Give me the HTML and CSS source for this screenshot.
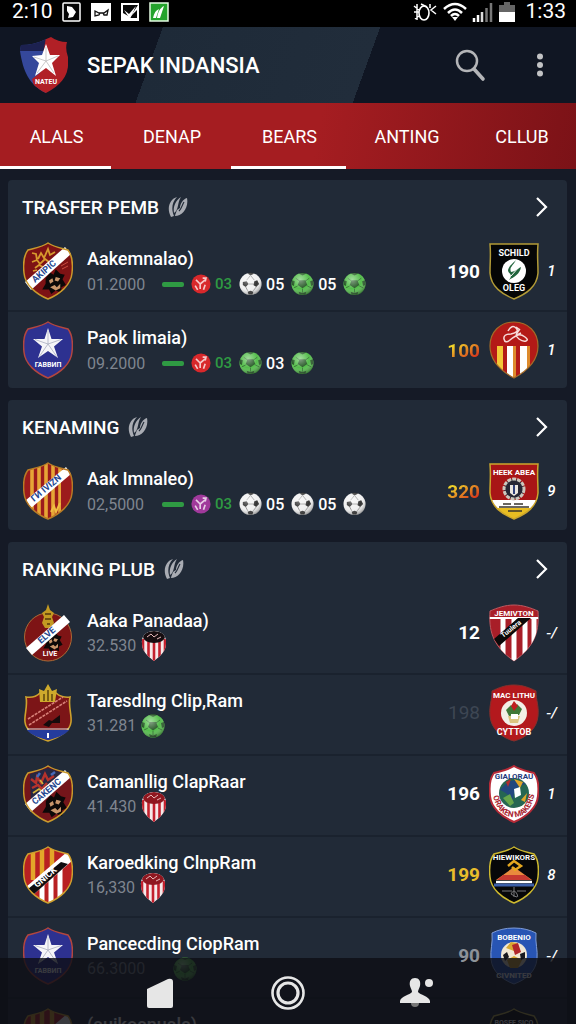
FILE: index.html
```html
<!DOCTYPE html>
<html lang="id">
<head>
<meta charset="utf-8">
<meta name="viewport" content="width=device-width, initial-scale=1">
<title>Sepak Indansia</title>
<link rel="stylesheet" href="styles.css">
</head>
<body>
<svg class="defs" aria-hidden="true">
  <defs>
    <path id="shield" d="M25 1C31 5 38 6 45 8C49 13 50 22 49 31C48 43 37 52 25 57C13 52 2 43 1 31C0 22 1 13 5 8C12 6 19 5 25 1Z"/>
    <path id="flat" d="M1 2H49C48 14 49 18 49 31C48 45 37 52 25 57C13 52 2 45 1 31C1 18 2 14 1 2Z"/>
    <path id="sunShape" d="M25 1C39 1 49 11 49 25C49 40 38 50 25 57C12 50 1 40 1 25C1 11 11 1 25 1Z"/>
    <clipPath id="shieldClip"><use href="#shield"/></clipPath>
    <clipPath id="flatClip"><use href="#flat"/></clipPath>
    <clipPath id="sunClip"><use href="#sunShape"/></clipPath>
    <radialGradient id="shine" cx=".4" cy=".3" r=".75"><stop offset="0" stop-color="#fff" stop-opacity=".45"/><stop offset=".55" stop-color="#fff" stop-opacity="0"/><stop offset="1" stop-color="#000" stop-opacity=".45"/></radialGradient>

    <symbol id="lion" viewBox="0 0 24 24">
      <path d="M5 9L9 4L12 6L14 1L18 5L22 6L20 10L23 15L19 17L19 22L14 20L10 23L8 19L2 19L5 14Z" fill="#0c0808"/>
      <path d="M8 11l3-2 1 3-3 2zM14 8l4 1-2 3-3-1zM9 17l4-2 2 2 3-3 0 4-4 2z" fill="#c9956b"/>
    </symbol>
    <symbol id="c-lion" viewBox="0 0 50 58">
      <use href="#shield" fill="#7d1214"/>
      <path d="M9 11l4 1 1 6M15 17l3-6 3 5 4-9 2 6 5-3M9 20l5-2 3 4 5-5 4 3M12 26l4-3 4 2M10 29l4-1" stroke="#d79a2d" stroke-width="1.800" fill="none"/>
      <use href="#lion" x="17" y="25" width="27" height="29"/>
      <path d="M2 40L42 5L48 12L8 48Z" fill="#fff"/>
      <text transform="translate(12 41) rotate(-41)" class="band-text">AKIPIC</text>
      <path d="M38 24l7-4M39 27l6-3" stroke="#c94b40"/>
      <use href="#shield" fill="none" stroke="#c9992c" stroke-width="1.500"/>
    </symbol>
    <symbol id="c-lion2" viewBox="0 0 50 58">
      <use href="#shield" fill="#74151a"/>
      <path d="M7 9L25 3L43 9L8 38Z" fill="#272741"/>
      <path d="M8 14l5 4 1-6 4 6 4-9 3 6 6-4M9 23l6-3 4 4 5-6" stroke="#b6322c" stroke-width="2.500" fill="none"/>
      <path d="M10 28l6-4 4 3 4-6M17 15l3 4" stroke="#d3b13b" stroke-width="1.800" fill="none"/>
      <path d="M14 12l3-4M28 10l4-3" stroke="#4669b8" stroke-width="2.500"/>
      <use href="#lion" x="17" y="25" width="28" height="29"/>
      <path d="M2 39L42 5L48 12L8 47Z" fill="#fff"/>
      <text transform="translate(12 40) rotate(-40)" class="band-text">CAKENC</text>
      <use href="#shield" fill="none" stroke="#c9992c" stroke-width="1.500"/>
    </symbol>
    <symbol id="c-star" viewBox="0 0 50 58">
      <use href="#shield" fill="#2d3190" stroke="#b3463f" stroke-width="1.500"/>
      <path d="M25 7L28.500 18L40 18L31 25.500L35 37L25 30L15 37L19 25.500L10 18L21.500 18Z" fill="#f5f5f8"/>
      <path d="M25 10V23L38 18.500M25 23L34 36M25 23L16 36M25 23L12 18.500" fill="none" stroke="#a9adbf" stroke-width=".8"/>
      <text x="25" y="46" class="crest-text tiny">ГАВВИП</text>
    </symbol>
    <symbol id="c-stripes" viewBox="0 0 50 58">
      <use href="#shield" fill="#9c1b1c"/>
      <g clip-path="url(#shieldClip)"><path d="M9 0V58M16 0V58M23 0V58M30 0V58M37 0V58" stroke="#e6a636" stroke-width="3.600"/><path d="M38 20H50V58H38Z" fill="#9c1b1c"/></g>
      <path d="M28 50l3-6 2 6 4-9" stroke="#f0bd42" stroke-width="2" fill="none"/>
      <path d="M3 38L43 5L48 12L8 46Z" fill="#fff"/>
      <text transform="translate(11 40) rotate(-40)" class="band-text">ГИ IVIZN</text>
      <use href="#shield" fill="none" stroke="#b77b25" stroke-width="1.500"/>
    </symbol>
    <symbol id="c-oval" viewBox="0 0 50 58">
      <ellipse cx="25" cy="33" rx="23.500" ry="24" fill="#7e1415" stroke="#a86a35"/>
      <path d="M25 0L27 6L31 9L29 13L31 19L28 24H22L19 19L21 13L19 9L23 6Z" fill="#c39a22"/>
      <path d="M22 10h6M22 15h6M24 20h3" stroke="#54390d" stroke-width="1.500"/>
      <use href="#lion" x="17" y="27" width="25" height="22"/>
      <path d="M3 44L41 11L47 18L9 51Z" fill="#fff"/>
      <text transform="translate(18 40) rotate(-41)" class="band-text">ELVE</text>
      <text x="27" y="52" class="crest-text tiny">LIVE</text>
    </symbol>
    <symbol id="c-crown" viewBox="0 0 50 58">
      <path id="crownShape" d="M3 13C9 14 14 12 17 9H33C36 12 42 14 47 13C45 22 49 31 48 38C47 47 37 53 25 57C13 53 3 47 2 38C1 31 5 22 3 13Z" fill="#7c1517" stroke="#cda12d" stroke-width="1.600"/>
      <path d="M4 46H46C42 51 34 54 25 56C16 54 8 51 4 46Z" fill="#253c9c"/>
      <path d="M4 45H46" stroke="#ddd" stroke-width="1.200"/>
      <path d="M5 35L40 13M6 41L44 17" stroke="#d88178" stroke-width="1.600" stroke-dasharray="3 1"/>
      <path d="M20 41l6-5 3 1 8-6v8H29l-3 4z" fill="#160b0c"/>
      <path d="M25 49v5" stroke="#fff" stroke-width="2"/>
      <path d="M17 18L16 5L21 7L25 0L29 7L34 5L32 18Z" fill="#ceaa2c"/>
      <path d="M21 17V10M25 17V6M29 17V10" stroke="#56400b" stroke-width="1.400"/>
    </symbol>
    <symbol id="c-redwhite" viewBox="0 0 50 58">
      <use href="#shield" fill="#b82022"/>
      <g clip-path="url(#shieldClip)">
        <path d="M10 0V34M19 0V30M29 0V25" stroke="#e3a629" stroke-width="4.500"/>
        <path d="M19 36V58M28 30V58M37 22V58" stroke="#fff" stroke-width="5"/>
        <path d="M3 41L44 6L50 14L10 49Z" fill="#fff"/>
        <path d="M5 43L38 16L45 18L10 49Z" fill="#0e0c10"/>
      </g>
      <text transform="translate(14 42) rotate(-40)" class="band-text outlined">GNICK</text>
      <use href="#shield" fill="none" stroke="#cfa02e" stroke-width="1.500"/>
    </symbol>

    <symbol id="r-schild" viewBox="0 0 50 58">
      <use href="#flat" fill="#050606" stroke="#b29b37" stroke-width="1.500"/>
      <circle cx="25" cy="29" r="12" fill="#fff"/>
      <path d="M27 18C24 24 20 25 22 30C25 30 28 27 32 25C31 32 25 35 20 38C25 32 19 32 19 28C20 24 24 21 27 18Z" fill="#20643c"/>
      <path d="M22 34l8-9" stroke="#fff"/>
      <text x="25" y="14" class="crest-text">SCHILD</text>
      <text x="25" y="49" class="crest-text">OLEG</text>
    </symbol>
    <symbol id="r-sun" viewBox="0 0 50 58">
      <use href="#sunShape" fill="#b31a17"/>
      <g clip-path="url(#sunClip)">
        <path d="M8 25H14V58H8Z" fill="#f3c838"/>
        <path d="M18 25H24V58H18ZM31 25H38V58H31Z" fill="#fff"/>
        <path d="M24 25H27V58H24ZM38 25H41V58H38Z" fill="#dd8a2c"/>
      </g>
      <path d="M19 10q4-7 8-3t-5 6q-8 0-7 5t6 1 8-5 7 2 1 4-7-2-2-6 3-4M27 6l4 3M28 14l4-2" fill="none" stroke="#f7dcda" stroke-width="1.500"/>
      <use href="#sunShape" fill="none" stroke="#a36b28" stroke-width="1.200"/>
    </symbol>
    <symbol id="r-heek" viewBox="0 0 50 58">
      <use href="#flat" fill="#a81516"/>
      <g clip-path="url(#flatClip)"><path d="M0 38H50V46H0Z" fill="#fff"/><path d="M0 46H50V58H0Z" fill="#e8bd22"/></g>
      <circle cx="25" cy="27" r="10" fill="#262634" stroke="#ccc7bd" stroke-width="3" stroke-dasharray="4 1"/>
      <path d="M21 23h8v8l-4 3-4-3z" fill="#ebe6e0"/><path d="M25 23v9" stroke="#30407a" stroke-width="2"/>
      <path d="M14 42h8m3 0h9M19 49h14M10 45h30" stroke="#39352d" stroke-width="1.400"/>
      <text x="25" y="13" class="crest-text small">HEEK ABEA</text>
      <use href="#flat" fill="none" stroke="#cba62d" stroke-width="1.500"/>
    </symbol>
    <symbol id="r-diagonal" viewBox="0 0 50 58">
      <clipPath id="pointClip"><path d="M25 1C34 1 42 4 49 7C50 25 48 41 25 57C2 41 0 25 1 7C8 4 16 1 25 1Z"/></clipPath>
      <path d="M25 1C34 1 42 4 49 7C50 25 48 41 25 57C2 41 0 25 1 7C8 4 16 1 25 1Z" fill="#a81e28" stroke="#bd5960"/>
      <g clip-path="url(#pointClip)"><path d="M14 15V58M25 15V58M36 15V58M45 15V58" stroke="#fff" stroke-width="5"/><path d="M0 14H50" stroke="#fff" stroke-width="2"/><path d="M5 35L29 14H42L10 42Z" fill="#0b0909"/></g>
      <text x="25" y="12" class="crest-text small">JEMIVTON</text>
      <text transform="translate(14 34) rotate(-38)" class="crest-text tiny left">Tuulera</text>
    </symbol>
    <symbol id="r-mac" viewBox="0 0 50 58">
      <path d="M25 1C34 1 41 4 47 7C47 17 50 21 49 32C48 45 37 54 25 57C13 54 2 45 1 32C0 21 3 17 3 7C9 4 16 1 25 1Z" fill="#b3191d" stroke="#86302c"/>
      <circle cx="25" cy="29" r="13" fill="#f3efe6"/>
      <path d="M17 26l5-5 3 3 3-4 5 5-3 6-10 1z" fill="#3f7837"/><path d="M22 22l3-5 4 5-4 5z" fill="#bf1e1f"/><path d="M19 32h12l-2 7h-8z" fill="#dbc680"/><path d="M22 30h7v5h-7z" fill="#fff"/>
      <text x="25" y="14" class="crest-text small">MAC LITHU</text>
      <text x="25" y="51" class="crest-text">CYTTOB</text>
    </symbol>
    <symbol id="r-bird" viewBox="0 0 50 58">
      <use href="#shield" fill="#fff" stroke="#b72a37" stroke-width="2"/>
      <circle cx="25" cy="28" r="15" fill="#256652"/>
      <path d="M11 25C20 15 25 12 37 19C28 21 25 25 24 35C20 30 16 27 11 25Z" fill="#23477e"/>
      <path d="M25 14l9 3-3 6zM32 35l6-7-2 9z" fill="#e0a528"/><path d="M25 24l6-2 1 8-6 3z" fill="#fff"/><path d="M14 33l7-4 4 9-4 3z" fill="#65a54b"/><path d="M17 17l5-3-3 8z" fill="#b12d2e"/>
      <text x="25" y="14" class="crest-text small blue">GIALORAU</text>
      <path id="birdArc" d="M4 31C9 50 19 52 25 52C33 52 43 48 46 25" fill="none"/>
      <text class="crest-text small red left"><textPath href="#birdArc">ORAKEN MAKERS</textPath></text>
    </symbol>
    <symbol id="r-hill" viewBox="0 0 50 58">
      <use href="#shield" fill="#070709"/>
      <path d="M25 21L43 34H7Z" fill="#e98a3d"/><path d="M14 29h22l6 5H8z" fill="#c63a31"/>
      <path d="M7 36H43" stroke="#fff" stroke-width="2.500"/><path d="M5 39H45" stroke="#3d60a9" stroke-width="3"/>
      <path d="M19 20l6-5 7 5-6 4-3-3" fill="none" stroke="#e5a720" stroke-width="2.500"/>
      <path d="M13 45h10m5 0h9M25 41v10M22 48q3-6 6 0t-6 0" stroke="#77777b" fill="none"/>
      <text x="25" y="14" class="crest-text small">HIEWIKORS</text>
      <use href="#shield" fill="none" stroke="#cdb92f" stroke-width="1.500"/>
    </symbol>
    <symbol id="r-blue" viewBox="0 0 50 58">
      <path d="M25 1C34 1 41 3 47 6C46 16 49 23 48 32C47 45 36 53 25 57C14 53 3 45 2 32C1 23 4 16 3 6C9 3 16 1 25 1Z" fill="#2855b4" stroke="#7f9cd7"/>
      <circle cx="25" cy="28" r="13" fill="#f0e7d4"/>
      <path d="M17 21l5-6 6 1-3 8zM18 33l7-4 8 4-4 8H21z" fill="#d9a832"/><path d="M23 18l6-2 3 9-6 3z" fill="#b1272b"/><path d="M14 28l4-3 2 5-4 4zM31 27l5-2v6l-4 2z" fill="#17181f"/>
      <text x="25" y="13" class="crest-text small">BOBENIO</text>
      <text x="25" y="51" class="crest-text small">CIVNITED</text>
    </symbol>
    <symbol id="r-dark" viewBox="0 0 50 58">
      <use href="#shield" fill="#0b0b0c" stroke="#c4b14c" stroke-width="1.500"/>
      <text x="25" y="17" class="crest-text tiny">BOSEF SICO</text>
      <circle cx="25" cy="30" r="9" fill="#b3963a"/>
    </symbol>

    <symbol id="ball" viewBox="0 0 24 24">
      <circle cx="12" cy="12" r="11.500" fill="currentColor"/>
      <path d="M9 8h6l2 5-5 3.500-5-3.500zM8 1l4 2 4-2-4-1zM1 8l3 1-1 5-2-1zM23 8l-3 1 1 5 2-1zM8 20l4 1.500 4-1.500-1 3H9z" fill="#17321b" opacity=".7"/>
      <path d="M9 9L5 6M15 9l4-3M17 14l4 2M7 14l-4 2M12 17v4" stroke="#17321b" opacity=".5"/>
      <circle cx="12" cy="12" r="11.500" fill="url(#shine)"/>
    </symbol>
    <symbol id="whiteball" viewBox="0 0 24 24">
      <circle cx="12" cy="12" r="11.500" fill="#f1f1f1"/>
      <path d="M4 10l4-1 2 3-3 3-3-2zM16 9l3-1 2 4-3 3-3-2zM9 20l3-1 3 1-1 3h-4zM9 1l3 2 4-2-4-1z" fill="#333"/>
      <path d="M10 12h5M7 15l2 4M18 15l-3 4M8 8l4-5 4 5" stroke="#999" fill="none"/>
      <circle cx="12" cy="12" r="11.500" fill="url(#shine)"/>
    </symbol>
    <symbol id="badge" viewBox="0 0 24 24">
      <circle cx="12" cy="12" r="11.500" fill="currentColor"/>
      <path d="M6 7l5 5v6M17 7l-6 5M14 5l4 0-1 4M5 14l3 5M17 13l-2 6" stroke="#fff" stroke-width="2" fill="none" opacity=".75"/>
    </symbol>
    <symbol id="stripeball" viewBox="0 0 26 30">
      <clipPath id="dropClip"><path d="M13 0C21 0 26 5 25 13C25 21 18 26 13 30C8 26 1 21 1 13C0 5 5 0 13 0Z"/></clipPath>
      <g clip-path="url(#dropClip)"><path d="M0 0H26V30H0Z" fill="#f5e9e9"/><path d="M2 8V30M7.500 8V30M13 8V30M18.500 8V30M24 8V30" stroke="#c3202d" stroke-width="2.600"/><ellipse cx="13" cy="6" rx="11" ry="6" fill="currentColor"/><path d="M6 6l4-3 3 3 4-3M16 8l4-2" stroke="#e7b9b9" fill="none"/></g>
    </symbol>
    <symbol id="hatch" viewBox="0 0 22 22">
      <path d="M10 1C3 3-1 12 4 21L7 20C4 13 5 6 10 1ZM14 1C8 5 6 11 7 17C12 14 10 7 14 1ZM20 2C16 3 13 8 13 12L10 14C9 17 8 19 8 20C15 20 22 12 20 2Z" fill="#a9acb3"/>
      <path d="M17 6C15 9 15 12 12 15" fill="none" stroke="#212a37" stroke-width="1.200"/>
    </symbol>
    <symbol id="chevron" viewBox="0 0 14 22"><path d="M2 2L11 11L2 20" fill="none" stroke="#fff" stroke-width="2.200"/></symbol>
  </defs>
</svg>

<div class="app">
  <div class="status">
    <span>2:10</span>
    <svg class="status-icon" viewBox="0 0 20 20"><rect x="1" y="1" width="17" height="18" rx="1" fill="#050505" stroke="#fff" stroke-width="1.500"/><path d="M5 4l5 1 4 5-3 5-5 1 1-4-2-3z" fill="#fff"/></svg>
    <svg class="status-icon" viewBox="0 0 20 20"><path d="M0 1h20v18H0z" fill="#fff"/><path d="M4 9v5l4-1 1-2 3 0 1 2 3 0 1-5-4 3H8z" fill="none" stroke="#111" stroke-width="1.300"/></svg>
    <svg class="status-icon" viewBox="0 0 20 20"><path d="M1 1h18v18H1z" fill="#fff"/><path d="M3 3h15L10 15 3 11zM17 8v8H9z" fill="#080808"/><path d="M4 8l5 4 7-8-6 13z" fill="#fff"/></svg>
    <svg class="status-icon" viewBox="0 0 20 20"><rect x="1" y="1" width="18" height="18" fill="#24a32c" stroke="#e4fbe2" stroke-width="1.500"/><path d="M4 16C5 11 7 8 10 7L7 16zM8 16C9 10 11 6 15 4L11 16z" fill="#fff"/></svg>
    <div class="status-right">
      <svg class="icon-alarm" viewBox="0 0 24 20"><ellipse cx="11" cy="11" rx="5" ry="7" fill="none" stroke="#fff" stroke-width="1.600"/><path d="M1 4l5 4M1 10h5M2 17l4-3M4 2v16M8 2l6 3M23 4l-5 4 5 4M17 2v4" stroke="#fff" stroke-width="1.500" fill="none"/></svg>
      <svg class="icon-wifi" viewBox="0 0 24 20"><path d="M1 7Q12-3 23 7M5 11Q12 4 19 11M8 14Q12 10 16 14" fill="none" stroke="#fff" stroke-width="2.500"/><path d="M9 15h6l-3 4z" fill="#fff"/></svg>
      <svg class="icon-signal" viewBox="0 0 20 20"><path d="M1 20v-4M5 20v-7" stroke="#fff" stroke-width="2.500"/><path d="M9 20V10" stroke="#ddd" stroke-width="2.500"/><path d="M13.500 20V6M18 20V1" stroke="#777" stroke-width="2.500"/></svg>
      <svg class="icon-battery" viewBox="0 0 16 20"><path d="M0 3h5V0h6v3h5v8H0z" fill="#666"/><path d="M0 10h16v10H0z" fill="#fff"/></svg>
      <span>1:33</span>
    </div>
  </div>

  <header class="header">
    <svg class="logo" viewBox="0 0 48 56">
      <clipPath id="logoClip"><path d="M1 8Q14 8 24 3L31 0Q38 5 47 5Q45 12 48 20C50 39 41 48 26 56C9 48 3 34 0 14Z"/></clipPath>
      <g clip-path="url(#logoClip)"><path d="M0 0H26V56H0Z" fill="#35489b"/><path d="M0 0H26V14H0Z" fill="#1c2150"/><path d="M26 0H48V56H16L12 42L20 36Z" fill="#b12026"/></g>
      <path d="M26 7L30 18L40 18L32 26L36 39L26 31L15 39L19 26L12 19L22 18Z" fill="#fff"/><path d="M26 10V24L38 19M26 24L34 36M26 24L17 36M26 24L14 20" fill="none" stroke="#bbb" stroke-width=".8"/>
      <text x="26" y="47" class="crest-text tiny">NATEU</text>
    </svg>
    <h1>SEPAK INDANSIA</h1>
    <button class="icon-button" aria-label="Search"><svg class="icon-search" viewBox="0 0 30 32"><circle cx="12" cy="12" r="10" fill="none" stroke="#b4b5b8" stroke-width="2.500"/><path d="M19 20L28 30" stroke="#b4b5b8" stroke-width="3.600" stroke-linecap="round"/></svg></button>
    <button class="icon-button" aria-label="More"><svg class="icon-more" viewBox="0 0 8 24"><circle cx="4" cy="3.500" r="3" fill="#c2c3c5"/><circle cx="4" cy="12" r="3" fill="#c2c3c5"/><circle cx="4" cy="20.500" r="3" fill="#c2c3c5"/></svg></button>
  </header>

  <nav class="tabs">
    <a href="#alals" class="tab active">ALALS</a>
    <a href="#denap" class="tab">DENAP</a>
    <a href="#bears" class="tab active">BEARS</a>
    <a href="#anting" class="tab">ANTING</a>
    <a href="#cllub" class="tab">CLLUB</a>
  </nav>

  <main class="content">
    <section class="card">
      <div class="card-head"><h2>TRASFER PEMB</h2><svg class="hatch"><use href="#hatch"/></svg><a class="more" href="#transfer" aria-label="Open"><svg class="chevron"><use href="#chevron"/></svg></a></div>
      <article class="row">
        <svg class="crest"><use href="#c-lion"/></svg>
        <div class="info"><h3>Aakemnalao)</h3><div class="meta"><span class="date">01.2000</span><i class="dash"></i>
          <span class="form"><svg class="ball first red-ball"><use href="#badge"/></svg><b class="gain">03</b></span>
          <span class="form"><svg class="ball"><use href="#whiteball"/></svg><b>05</b></span>
          <span class="form"><svg class="ball green-ball"><use href="#ball"/></svg><b>05</b></span>
          <span class="form"><svg class="ball green-ball"><use href="#ball"/></svg></span></div></div>
        <span class="score">190</span><svg class="crest"><use href="#r-schild"/></svg><span class="mark">1</span>
      </article>
      <article class="row">
        <svg class="crest"><use href="#c-star"/></svg>
        <div class="info"><h3>Paok limaia)</h3><div class="meta"><span class="date">09.2000</span><i class="dash"></i>
          <span class="form"><svg class="ball first red-ball"><use href="#badge"/></svg><b class="gain">03</b></span>
          <span class="form"><svg class="ball green-ball"><use href="#ball"/></svg><b>03</b></span>
          <span class="form"><svg class="ball green-ball"><use href="#ball"/></svg></span></div></div>
        <span class="score fire">100</span><svg class="crest"><use href="#r-sun"/></svg><span class="mark">1</span>
      </article>
    </section>

    <section class="card">
      <div class="card-head"><h2>KENAMING</h2><svg class="hatch"><use href="#hatch"/></svg><a class="more" href="#kenaming" aria-label="Open"><svg class="chevron"><use href="#chevron"/></svg></a></div>
      <article class="row">
        <svg class="crest"><use href="#c-stripes"/></svg>
        <div class="info"><h3>Aak Imnaleo)</h3><div class="meta"><span class="date">02,5000</span><i class="dash"></i>
          <span class="form"><svg class="ball first purple-ball"><use href="#badge"/></svg><b class="gain">03</b></span>
          <span class="form"><svg class="ball"><use href="#whiteball"/></svg><b>05</b></span>
          <span class="form"><svg class="ball"><use href="#whiteball"/></svg><b>05</b></span>
          <span class="form"><svg class="ball"><use href="#whiteball"/></svg></span></div></div>
        <span class="score fire">320</span><svg class="crest"><use href="#r-heek"/></svg><span class="mark">9</span>
      </article>
    </section>

    <section class="card ranking">
      <div class="card-head"><h2>RANKING PLUB</h2><svg class="hatch"><use href="#hatch"/></svg><a class="more" href="#ranking" aria-label="Open"><svg class="chevron"><use href="#chevron"/></svg></a></div>
      <article class="row">
        <svg class="crest"><use href="#c-oval"/></svg>
        <div class="info"><h3>Aaka Panadaa)</h3><div class="meta"><span>32.530</span><svg class="drop black-top"><use href="#stripeball"/></svg></div></div>
        <span class="score">12</span><svg class="crest"><use href="#r-diagonal"/></svg><span class="mark">-/</span>
      </article>
      <article class="row">
        <svg class="crest"><use href="#c-crown"/></svg>
        <div class="info"><h3>Taresdlng Clip,Ram</h3><div class="meta"><span>31.281</span><svg class="drop green-ball"><use href="#ball"/></svg></div></div>
        <span class="score faded">198</span><svg class="crest"><use href="#r-mac"/></svg><span class="mark">-/</span>
      </article>
      <article class="row">
        <svg class="crest"><use href="#c-lion2"/></svg>
        <div class="info"><h3>Camanllig ClapRaar</h3><div class="meta"><span>41.430</span><svg class="drop red-top"><use href="#stripeball"/></svg></div></div>
        <span class="score">196</span><svg class="crest"><use href="#r-bird"/></svg><span class="mark">1</span>
      </article>
      <article class="row">
        <svg class="crest"><use href="#c-redwhite"/></svg>
        <div class="info"><h3>Karoedking ClnpRam</h3><div class="meta"><span>16,330</span><svg class="drop red-top"><use href="#stripeball"/></svg></div></div>
        <span class="score gold">199</span><svg class="crest"><use href="#r-hill"/></svg><span class="mark">8</span>
      </article>
      <article class="row">
        <svg class="crest"><use href="#c-star"/></svg>
        <div class="info"><h3>Pancecding CiopRam</h3><div class="meta wide"><span>66.3000</span><svg class="drop green-ball"><use href="#ball"/></svg></div></div>
        <span class="score muted">90</span><svg class="crest"><use href="#r-blue"/></svg><span class="mark">-/</span>
      </article>
      <article class="row">
        <svg class="crest"><use href="#c-redwhite"/></svg>
        <div class="info"><h3>(auikoanuala)</h3><div class="meta"></div></div>
        <svg class="crest"><use href="#r-dark"/></svg><span class="mark"></span>
      </article>
    </section>
  </main>

  <nav class="bottom">
    <button class="icon-button" aria-label="Home"><svg class="icon-home" viewBox="0 0 28 31"><path d="M1 11L22 1Q27 0 27 4V28Q27 30 25 30H3Q1 30 1 28Z" fill="#e6e6e6"/></svg></button>
    <button class="icon-button" aria-label="Main"><svg class="icon-ring" viewBox="0 0 34 34"><circle cx="17" cy="17" r="15.500" fill="none" stroke="#e6e6e6" stroke-width="2.600"/><circle cx="17" cy="17" r="10" fill="none" stroke="#e6e6e6" stroke-width="3.200"/></svg></button>
    <button class="icon-button" aria-label="Profile"><svg class="icon-user" viewBox="0 0 34 32"><path d="M12 26h8a4 4 0 0 1-8 0z" fill="#777"/><path d="M16 1c4 0 6 3 5 8-1 3-2 4-2 6 2 3 11 4 12 9v2H1v-2c1-5 10-6 12-9 0-2-1-3-2-6-1-5 1-8 5-8z" fill="#e6e6e6"/><circle cx="30" cy="6" r="4" fill="#e6e6e6"/></svg></button>
  </nav>
</div>
</body>
</html>
```
FILE: styles.css
```css
* { box-sizing: border-box; }

body {
  margin: 0;
  background: #151a26;
  color: #fff;
  font-family: Roboto, "Noto Sans", sans-serif;
}

h1, h2, h3 { margin: 0; font-weight: 500; }
a { color: inherit; text-decoration: none; }
svg { display: block; flex: none; overflow: visible; }
.defs { position: absolute; width: 0; height: 0; }

.app {
  position: relative;
  display: flex;
  flex-direction: column;
  height: 100vh;
  overflow: hidden;
}

.status {
  flex: none;
  display: flex;
  align-items: center;
  gap: 9px;
  height: 27px;
  padding: 0 10px 4px 12px;
  background: #000;
  font-size: 21px;
  line-height: 23px;
}
.status-icon { width: 20px; height: 20px; }
.status-right { display: flex; align-items: center; gap: 6px; margin-left: auto; }
.icon-alarm, .icon-wifi { width: 24px; height: 20px; }
.icon-signal { width: 20px; height: 20px; }
.icon-battery { width: 16px; height: 20px; }
.status-right span { margin-left: 5px; }

.header {
  flex: none;
  display: flex;
  align-items: center;
  height: 76px;
  padding: 0 12px 0 20px;
  background: linear-gradient(110deg, #101623 27%, #1e2a38 27%, #212d3b 63%, #101623 63%);
}
.logo { width: 48px; height: 56px; }
.header h1 { flex: 1; margin-left: 19px; font-size: 22px; }
.icon-button {
  display: grid;
  place-items: center;
  min-width: 48px;
  height: 48px;
  padding: 0;
  border: 0;
  background: none;
}
.header .icon-button + .icon-button { margin-left: 22px; }
.icon-search { width: 30px; height: 32px; }
.icon-more { width: 8px; height: 24px; }

.tabs {
  flex: none;
  display: grid;
  grid-template-columns: 111fr 120fr 115fr 120fr 110fr;
  height: 66px;
  background: linear-gradient(100deg, #a51d21 55%, #7b1217);
}
.tab {
  display: grid;
  place-items: center;
  padding: 3px 0 0 2px;
  border-bottom: 3px solid transparent;
  font-size: 18px;
}
.tab.active { border-color: #fff; }

.content {
  flex: 1;
  display: flex;
  flex-direction: column;
  gap: 12px;
  padding: 11px 9px 0 8px;
  overflow-y: auto;
  scrollbar-width: none;
}
.card { flex: none; background: #212a37; border-radius: 4px; }
.card-head {
  display: flex;
  align-items: center;
  height: 52px;
  padding: 2px 18px 0 14px;
}
.card-head h2 { font-size: 19px; }
.hatch { width: 22px; height: 22px; margin-left: 8px; }
.more { margin-left: auto; }
.chevron { width: 14px; height: 22px; }

.row {
  display: flex;
  align-items: center;
  height: 78px;
  padding: 0 3px 0 15px;
}
.row + .row { border-top: 2px solid #1a222e; }
.ranking .row { height: 79px; padding-bottom: 2px; }
.ranking .row + .row { height: 81px; padding-bottom: 4px; }
.crest { width: 50px; height: 58px; }
.info { flex: 1; min-width: 0; padding-left: 14px; }
.info h3 { font-size: 18px; line-height: 26px; }
.meta {
  display: flex;
  align-items: center;
  gap: 7px;
  height: 24px;
  color: #7f858f;
  font-size: 16px;
}
.date { width: 68px; }
.dash { width: 22px; height: 5px; border-radius: 2px; background: #2f9a43; }
.form { display: flex; align-items: center; gap: 4px; }
.form b { color: #fff; font-weight: 500; font-size: 16px; }
.form .gain { color: #2f9a43; font-size: 15px; }
.ball { width: 23px; height: 24px; }
.ball.first { width: 20px; height: 20px; }
.green-ball { color: #55bd4c; }
.red-ball { color: #d8282b; }
.purple-ball { color: #a0399b; }
.ranking .meta { gap: 5px; }
.drop { width: 26px; height: 30px; }
.drop.green-ball { width: 24px; height: 26px; }
.ranking .meta.wide { gap: 28px; }
.black-top { color: #160d10; }
.red-top { color: #8f1720; }

.score { margin-right: 9px; font-size: 19px; font-weight: 700; }
.fire { color: transparent; background: linear-gradient(150deg, #f0d32a 25%, #d42c1b 85%); background-clip: text; }
.gold { color: #e9bd2b; }
.faded { color: #3d4653; font-weight: 400; }
.muted { position: relative; z-index: 1; color: #8d9299; }
.mark { width: 25px; text-align: center; font-size: 15px; font-style: italic; font-weight: 500; }

.crest-text { fill: #fff; font-size: 9px; font-weight: 700; text-anchor: middle; }
.crest-text.small { font-size: 8px; }
.crest-text.tiny { font-size: 7px; }
.crest-text.left { text-anchor: start; }
.crest-text.blue { fill: #233a7c; }
.crest-text.red { fill: #a92330; }
.band-text { fill: #24468f; font-size: 9px; font-weight: 700; }
.band-text.outlined { fill: #fff; }

.bottom {
  position: absolute;
  right: 0;
  bottom: 0;
  left: 0;
  display: flex;
  justify-content: center;
  align-items: center;
  gap: 80px;
  height: 66px;
  padding-top: 4px;
  background: rgba(13, 15, 21, .82);
}
.icon-home { width: 28px; height: 31px; }
.icon-ring { width: 34px; height: 34px; }
.icon-user { width: 34px; height: 32px; }
```
